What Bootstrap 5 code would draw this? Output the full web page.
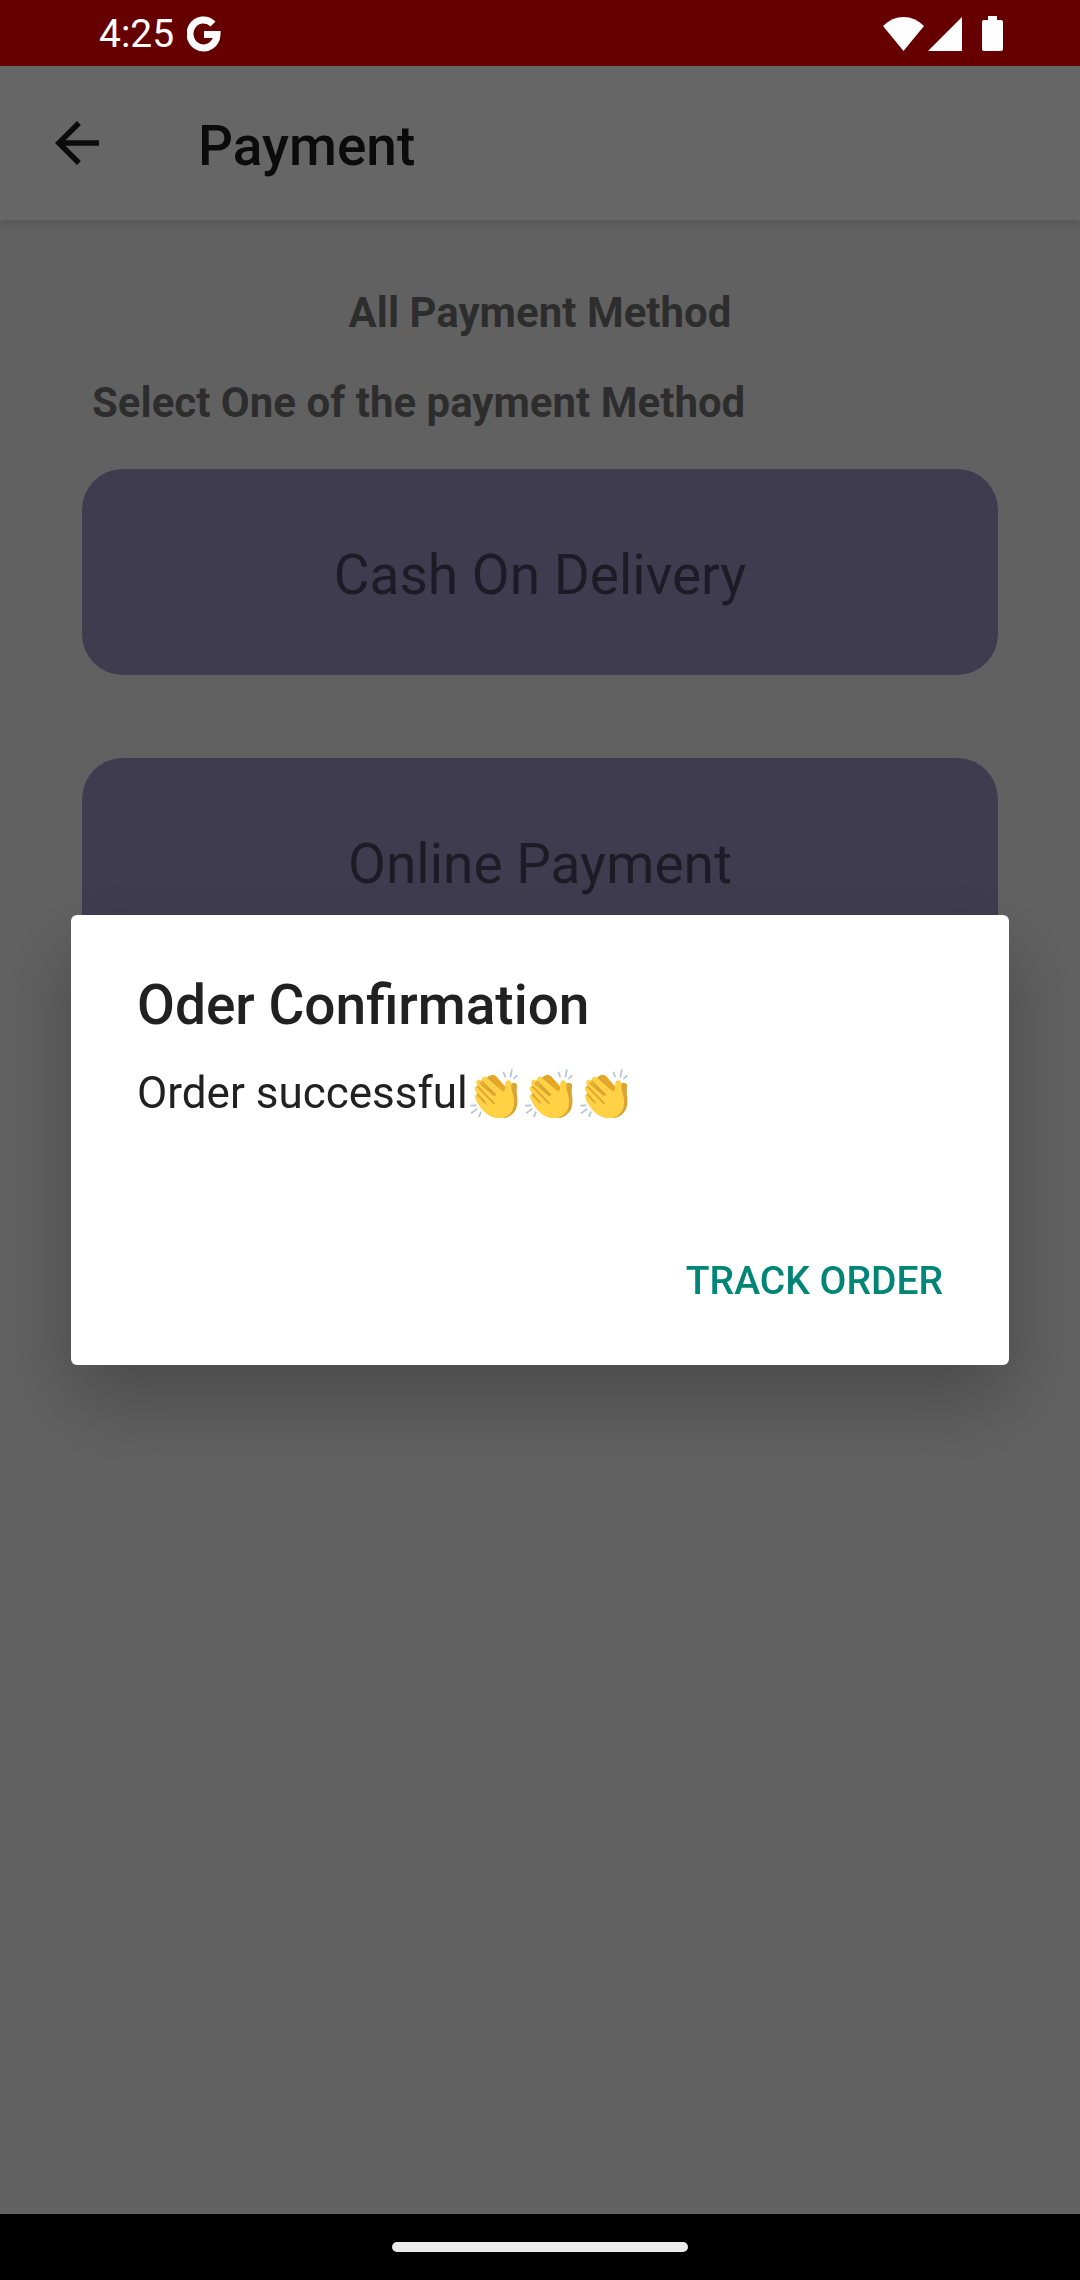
<!DOCTYPE html>
<html lang="en">
<head>
<meta charset="utf-8">
<meta name="viewport" content="width=device-width, initial-scale=1">
<title>Payment</title>
<link href="https://cdn.jsdelivr.net/npm/bootstrap@5.3.0/dist/css/bootstrap.min.css" rel="stylesheet">
<style>
  body { font-family: Roboto, "Noto Sans", sans-serif; background: #f2f2f2; }
  svg { display: block; }
  /* The system bars stay above the dialog's scrim */
  .status-bar, .nav-bar { position: relative; z-index: 1060; }
  .status-bar { height: 66px; padding: 2px 77px 0 99px; background: #600; color: #fff; font-size: 39px; line-height: 64px; }
  .status-left { gap: 13px; }
  .nav-bar { height: 66px; background: #000; }
  .home-pill { width: 296px; height: 10px; border-radius: 5px; background: #ebebeb; }
  .app-bar { height: 154px; padding: 0 44px; gap: 88px; background: #fff; color: #1c1c1e; box-shadow: 0 2px 8px rgba(0, 0, 0, .15); }
  .app-title { padding-top: 6px; font-size: 55px; line-height: 66px; font-weight: 500; }
  .content { padding: 68px 82px; color: rgba(0, 0, 0, .54); }
  .heading-text { font-size: 42px; line-height: 50px; font-weight: 700; }
  .subheading { padding: 0 10px; margin: 40px 0 41px; }
  .methods { gap: 83px; }
  .method-btn, .method-btn:hover { height: 206px; padding-top: 12px; border: 0; border-radius: 41px; background: #9f96c8; color: rgba(0, 0, 0, .54); font-size: 55px; }
  .scrim { background: rgba(0, 0, 0, .6); }
  .scrim .modal-dialog { max-width: none; margin: 0 71px; min-height: 100%; }
  .scrim .modal-content { padding: 55px 66px 34px; border: 0; border-radius: 6px; color: #212121; box-shadow: 0 34px 80px rgba(0, 0, 0, .26); }
  .dialog-title { font-size: 55px; line-height: 70px; font-weight: 500; }
  .dialog-message { font-size: 44px; line-height: 52px; margin: 27px 0 112px; gap: 5px; }
  .clap { width: 50px; height: 51px; }
  .clap:first-of-type { margin-left: -4px; }
  .track-btn, .track-btn:hover { padding: 24px 0; border: 0; color: #008577; font-size: 39px; line-height: 52px; font-weight: 500; }
</style>
</head>
<body>
<div class="d-flex flex-column min-vh-100">
  <div class="status-bar d-flex align-items-center justify-content-between">
    <div class="status-left d-flex align-items-center">
      <span>4:25</span>
      <svg width="34" height="36" viewBox="0 0 34 36" fill="none" stroke="#fff" stroke-width="7" aria-label="Google"><path d="M26 8A13.500 14 0 1 0 30 18.500H17"/></svg>
    </div>
    <svg width="120" height="36" viewBox="0 0 120 36" fill="#fff" aria-hidden="true">
      <path d="M0 10Q9 1 20.500 1T41 10L20.500 35Z"/>
      <path d="M79 1V35H45Z"/>
      <path d="M105 0h9v4h4q2 0 2 2v27q0 2-2 2h-17q-2 0-2-2V6q0-2 2-2h4Z"/>
    </svg>
  </div>

  <header class="app-bar d-flex align-items-center">
    <a href="#" class="text-reset" aria-label="Back">
      <svg width="66" height="66" viewBox="0 0 24 24" fill="currentColor"><path d="M20 11H7.830l5.590-5.590L12 4l-8 8 8 8 1.410-1.410L7.830 13H20z"/></svg>
    </a>
    <h1 class="app-title mb-0">Payment</h1>
  </header>

  <main class="content flex-grow-1">
    <h2 class="heading-text text-center mb-0">All Payment Method</h2>
    <p class="heading-text subheading">Select One of the payment Method</p>
    <div class="methods d-grid">
      <button type="button" class="btn method-btn">Cash On Delivery</button>
      <button type="button" class="btn method-btn">Online Payment</button>
    </div>
  </main>

  <div class="nav-bar d-flex align-items-center justify-content-center"><div class="home-pill"></div></div>
</div>

<div class="modal scrim d-block" role="dialog" aria-modal="true" aria-labelledby="dialogTitle">
  <div class="modal-dialog modal-dialog-centered">
    <div class="modal-content">
      <h2 class="dialog-title mb-0" id="dialogTitle">Oder Confirmation</h2>
      <div class="dialog-message d-flex align-items-center">
        <span>Order successful</span>
        <svg class="clap" viewBox="30 51 150 153" role="img" aria-label="clapping hands">
          <defs>
            <g id="clapHands">
              <path d="M82 82Q88 74 97 72Q105 70 111 76L138 106L155 101Q158 94 168 96Q176 98 174 108Q172 119 174 133Q178 157 171 175Q161 195 138 201L118 197Z" fill="#dba332"/>
              <path d="M97 76L136 122M110 77L137 111" stroke="#f3ad18" stroke-width="4" fill="none"/>
              <path d="M72 79Q77 74 84 80L131 121Q137 123 138 111L139 96Q140 88 148 88Q157 89 157 100Q156 115 162 130Q170 158 160 178Q148 200 125 201Q101 204 79 185Q60 168 51 146Q46 137 49 132Q51 128 56 130Q45 116 48 109Q51 104 56 107Q49 95 54 88Q59 84 68 91Q67 83 72 79Z" fill="#ffd144"/>
              <path d="M68 91L109 131M56 107L105 157M56 130L78 155M64 97L105 132" stroke="#dba332" stroke-width="5" stroke-linecap="round" fill="none"/>
              <path d="M133 62l6 17M159 55l-5 24M175 73l-12 11M34 164l18-1M36 187l19-14M66 182l-6 16" stroke="#b5c3cc" stroke-width="5" fill="none"/>
            </g>
          </defs>
          <use href="#clapHands"/>
        </svg>
        <svg class="clap" viewBox="30 51 150 153" role="img" aria-label="clapping hands"><use href="#clapHands"/></svg>
        <svg class="clap" viewBox="30 51 150 153" role="img" aria-label="clapping hands"><use href="#clapHands"/></svg>
      </div>
      <div class="d-flex justify-content-end">
        <button type="button" class="btn track-btn">TRACK ORDER</button>
      </div>
    </div>
  </div>
</div>
<script src="https://cdn.jsdelivr.net/npm/bootstrap@5.3.0/dist/js/bootstrap.bundle.min.js"></script>
</body>
</html>
